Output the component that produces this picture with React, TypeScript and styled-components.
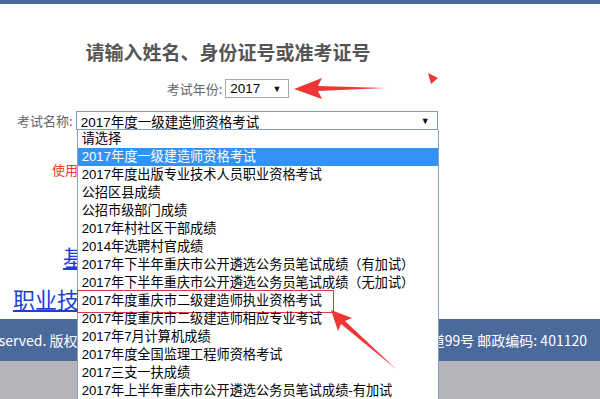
import React from 'react';
import styled, { createGlobalStyle } from 'styled-components';

const GlobalStyle = createGlobalStyle`
  html, body {
    margin: 0;
    padding: 0;
    background: #ffffff;
  }
  body {
    font-family: "Liberation Sans", "Noto Sans CJK SC", sans-serif;
    overflow: hidden;
  }
`;

const Page = styled.div`
  width: 600px;
  height: 399px;
  display: flex;
  flex-direction: column;
  background: #b5b5b9;
  position: relative;
  overflow: hidden;
`;

const TopBar = styled.div`
  height: 4px;
  background: #4a6a9c;
`;

const Main = styled.div`
  height: 315px;
  flex-shrink: 0;
  background: #ffffff;
  position: relative;
  z-index: 2;
`;

const Form = styled.div`
  width: 456px;
  display: flex;
  flex-direction: column;
`;

const Title = styled.h2`
  margin: 36px 0 0;
  font-family: "Noto Sans CJK SC", sans-serif;
  font-size: 19px;
  line-height: 24px;
  font-weight: 700;
  color: #555555;
  text-align: center;
`;

const YearRow = styled.div`
  margin-top: 15px;
  display: flex;
  justify-content: center;
  align-items: center;
  gap: 3px;
`;

const Label = styled.span`
  font-family: "Noto Sans CJK SC", sans-serif;
  font-size: 13px;
  color: #666666;
`;

const SelectBox = styled.div<{ $width: number; $focused?: boolean }>`
  position: relative;
  width: ${(p) => p.$width}px;
  height: 19px;
  box-sizing: border-box;
  border: 1px solid ${(p) => (p.$focused ? '#7a9bd2' : '#a9a9a9')};
  background: #ffffff;
  display: flex;
  align-items: center;
  justify-content: space-between;
  padding: 0 7px 0 4px;
  font-family: "Liberation Sans", "Noto Sans CJK SC", sans-serif;
  font-size: 13.5px;
  color: #000000;
`;

const Caret = styled.span`
  font-size: 9px;
  color: #111111;
`;

const NameRow = styled.div`
  margin-top: 13px;
  padding-left: 17px;
  display: flex;
  align-items: center;
  gap: 3px;
`;

const Notice = styled.div`
  margin-top: 31px;
  padding-left: 52px;
  font-family: "Noto Sans CJK SC", sans-serif;
  font-size: 13px;
  line-height: 18px;
  color: #e0401c;
  white-space: nowrap;
`;

const BigLink = styled.a<{ $indent: number }>`
  display: block;
  padding-left: ${(p) => p.$indent}px;
  font-family: "Noto Sans CJK SC", sans-serif;
  font-size: 22px;
  line-height: 30px;
  color: #1d3fd6;
  text-decoration: underline;
  white-space: nowrap;
`;

const Links = styled.div`
  margin-top: 62px;
  display: flex;
  flex-direction: column;
  gap: 12px;
`;

const Footer = styled.div`
  height: 42px;
  flex-shrink: 0;
  background: #4a6a9c;
  display: flex;
  align-items: center;
  justify-content: flex-end;
  padding-right: 13px;
  overflow: hidden;
  white-space: nowrap;
  font-family: "Noto Sans CJK SC", sans-serif;
  font-size: 14px;
  color: #ffffff;
`;

const DropList = styled.ul`
  position: absolute;
  top: 18px;
  left: 0;
  width: 362px;
  margin: 0;
  padding: 0;
  list-style: none;
  box-sizing: border-box;
  background: #ffffff;
  border-left: 1px solid #8e9fc6;
  border-right: 1px solid #8e9fc6;
  z-index: 5;
`;

const DropItem = styled.li<{ $active?: boolean }>`
  position: relative;
  height: 18px;
  line-height: 18px;
  padding-left: 4px;
  font-family: "Liberation Sans", "Noto Sans CJK SC", sans-serif;
  font-size: 13.2px;
  white-space: nowrap;
  color: ${(p) => (p.$active ? '#ffffff' : '#000000')};
  background: ${(p) => (p.$active ? '#3392f6' : 'transparent')};
`;

const MarkBox = styled.span`
  position: absolute;
  left: -1px;
  top: -2px;
  width: 257px;
  height: 23px;
  box-sizing: border-box;
  border: 1px solid #dd3b3b;
  pointer-events: none;
`;

const Annotations = styled.svg`
  position: absolute;
  left: 0;
  top: 0;
  width: 600px;
  height: 399px;
  pointer-events: none;
  z-index: 10;
`;

const exams = [
  '请选择',
  '2017年度一级建造师资格考试',
  '2017年度出版专业技术人员职业资格考试',
  '公招区县成绩',
  '公招市级部门成绩',
  '2017年村社区干部成绩',
  '2014年选聘村官成绩',
  '2017年下半年重庆市公开遴选公务员笔试成绩（有加试）',
  '2017年下半年重庆市公开遴选公务员笔试成绩（无加试）',
  '2017年度重庆市二级建造师执业资格考试',
  '2017年度重庆市二级建造师相应专业考试',
  '2017年7月计算机成绩',
  '2017年度全国监理工程师资格考试',
  '2017三支一扶成绩',
  '2017年上半年重庆市公开遴选公务员笔试成绩-有加试',
];

const App: React.FC = () => {
  return (
    <>
      <GlobalStyle />
      <Page>
        <TopBar />
        <Main>
          <Form>
            <Title>请输入姓名、身份证号或准考证号</Title>
            <YearRow>
              <Label>考试年份:</Label>
              <SelectBox $width={64}>
                <span>2017</span>
                <Caret>▼</Caret>
              </SelectBox>
            </YearRow>
            <NameRow>
              <Label>考试名称:</Label>
              <SelectBox $width={362} $focused>
                <span>2017年度一级建造师资格考试</span>
                <Caret>▼</Caret>
                <DropList>
                  {exams.map((name, i) => (
                    <DropItem key={i} $active={i === 1}>
                      {name}
                      {i === 9 && <MarkBox />}
                    </DropItem>
                  ))}
                </DropList>
              </SelectBox>
            </NameRow>
            <Notice>使用说明：请选择考试名称后输入查询信息</Notice>
            <Links>
              <BigLink $indent={63} href="#">基础成绩查询</BigLink>
              <BigLink $indent={13} href="#">职业技能鉴定成绩查询</BigLink>
            </Links>
          </Form>
        </Main>
        <Footer>
          Copyright © 2017 All Rights Reserved. 版权所有：重庆市人事考试中心 地址：重庆市渝北区青枫北大道99号 邮政编码: 401120
        </Footer>
        <Annotations viewBox="0 0 600 399">
          <polygon points="294,89 322,78 318,86 386,88 318,91 322,99" fill="#f03535" />
          <polygon points="428,73 438,78 431,84" fill="#f03535" />
          <polygon points="331,310 352,318 345,321 396,369 341,324 338,331" fill="#f03535" />
        </Annotations>
      </Page>
    </>
  );
};

export default App;
